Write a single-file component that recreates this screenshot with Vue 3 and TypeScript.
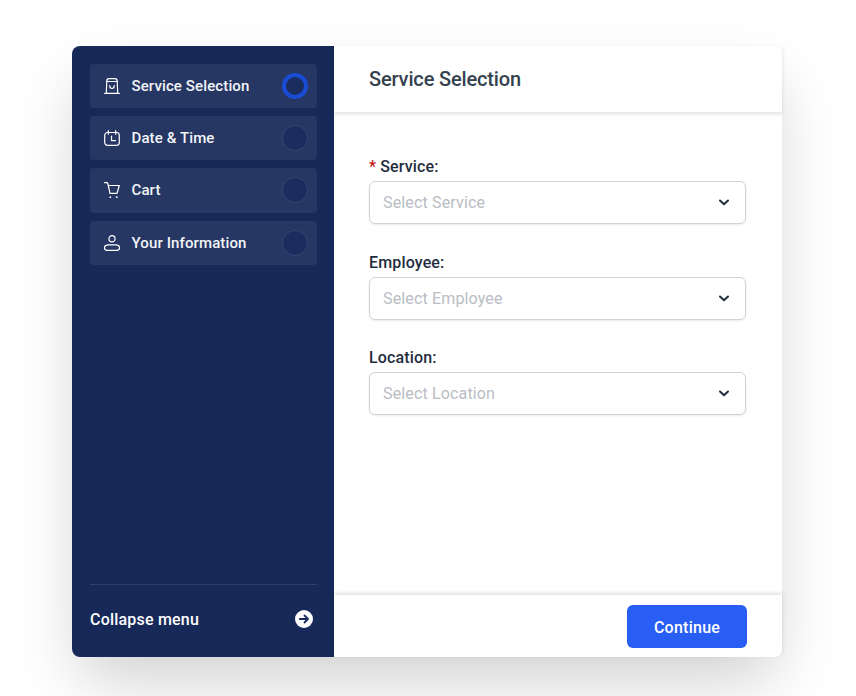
<script setup lang="ts">
const steps = [
  { label: 'Service Selection', icon: 'bag', active: true },
  { label: 'Date & Time', icon: 'cal', active: false },
  { label: 'Cart', icon: 'cart', active: false },
  { label: 'Your Information', icon: 'user', active: false },
]
const fields = [
  { label: 'Service:', placeholder: 'Select Service', required: true },
  { label: 'Employee:', placeholder: 'Select Employee', required: false },
  { label: 'Location:', placeholder: 'Select Location', required: false },
]
</script>

<template>
  <div class="page">
    <div class="card">
      <aside class="side">
        <ul class="steps">
          <li v-for="s in steps" :key="s.label" class="step">
            <svg class="ico" viewBox="0 0 16 16" fill="none" stroke="currentColor" stroke-width="1.2" stroke-linecap="round" stroke-linejoin="round">
              <template v-if="s.icon === 'bag'">
                <path d="M2.300 15.400 2.800 3Q2.900 0.700 5 0.700H11Q13.100 0.700 13.200 3L13.700 15.400" />
                <path d="M0.700 15.400H15.300M2.800 3.500H13.200" />
                <path d="M5.700 7.500Q5.700 10.500 8 10.500T10.300 7.500" />
              </template>
              <template v-else-if="s.icon === 'cal'">
                <rect x="0.700" y="2.500" width="14.600" height="12.800" rx="2.800" />
                <path d="M4.300 0.700v3.500M11.700 0.700v3.500M7.500 6v4.600H11.500" />
              </template>
              <template v-else-if="s.icon === 'cart'">
                <path d="M0.600 0.700H2.800Q3.600 0.700 3.800 1.500L6 11.300H13L15.300 3.500H4.400" />
                <path d="M6.300 15.200h.1M12.700 15.200h.1" stroke-width="1.700" />
              </template>
              <template v-else>
                <circle cx="8" cy="3.800" r="3.100" />
                <path d="M3.700 9.800H12.300C17 10.300 16 15.300 13 15.300H3C0 15.300 -1 10.300 3.700 9.800Z" />
              </template>
            </svg>
            <span class="step-label">{{ s.label }}</span>
            <span class="dot" :class="{ on: s.active }"></span>
          </li>
        </ul>
        <div class="collapse">
          <span>Collapse menu</span>
          <svg class="arrow" viewBox="0 0 18 18">
            <circle cx="9" cy="9" r="9" fill="#fff" />
            <path d="M4.800 9H13M9.500 5.500 13 9 9.500 12.500" fill="none" stroke="#182a5b" stroke-width="1.800" stroke-linecap="round" stroke-linejoin="round" />
          </svg>
        </div>
      </aside>
      <main class="main">
        <header class="head"><h1>Service Selection</h1></header>
        <section class="body">
          <div v-for="f in fields" :key="f.label" class="field">
            <label><span v-if="f.required" class="req">*</span>{{ f.label }}</label>
            <div class="select">
              <span>{{ f.placeholder }}</span>
              <svg class="chev" viewBox="0 0 10 7" fill="none" stroke="#1f2d3d" stroke-width="2" stroke-linecap="round" stroke-linejoin="round">
                <path d="M1 1.500 5 5.300 9 1.500" />
              </svg>
            </div>
          </div>
        </section>
        <footer class="foot"><button type="button">Continue</button></footer>
      </main>
    </div>
  </div>
</template>

<style>
html, body { margin: 0; background: #fff; }
</style>

<style scoped>
* { box-sizing: border-box; }
.page {
  width: 856px;
  height: 696px;
  padding: 46px 74px 39px 72px;
  overflow: hidden;
  font-family: Roboto, "Liberation Sans", sans-serif;
}
.card {
  display: flex;
  height: 611px;
  border-radius: 8px;
  background: #fff;
  box-shadow: 0 30px 60px -8px rgba(0, 0, 0, 0.19);
}
.side {
  width: 262px;
  flex: none;
  display: flex;
  flex-direction: column;
  justify-content: space-between;
  background: #172959;
  border-radius: 8px 0 0 8px;
  padding: 18px 17px 0 18px;
}
.steps {
  list-style: none;
  margin: 0;
  padding: 0;
  display: flex;
  flex-direction: column;
  gap: 8px;
}
.step {
  height: 44.2px;
  display: flex;
  align-items: center;
  padding: 0 9px 0 14px;
  border-radius: 4px;
  background: #263763;
  color: #fff;
}
.ico { width: 16px; height: 16px; flex: none; color: #fff; overflow: visible; }
.step-label {
  flex: 1;
  margin-left: 11.5px;
  font-size: 15px;
  font-weight: 500;
  letter-spacing: 0.12px;
  color: #f2f4f8;
}
.dot {
  width: 26px;
  height: 26px;
  border-radius: 50%;
  background: #1b2c5e;
  border: 1px solid #34456f;
}
.dot.on { border: 4px solid #1a4bd4; }
.collapse {
  height: 73px;
  display: flex;
  align-items: center;
  justify-content: space-between;
  padding: 0 4px 4px 0;
  border-top: 1px solid #2e3f6c;
  color: #fff;
  font-size: 16px;
  font-weight: 500;
  letter-spacing: 0.2px;
}
.arrow { width: 18px; height: 18px; }
.main { flex: 1; display: flex; flex-direction: column; min-width: 0; }
.head {
  height: 66px;
  display: flex;
  align-items: center;
  padding-left: 35px;
  box-shadow: 0 2px 4px rgba(0, 0, 0, 0.12);
}
.head h1 {
  margin: 0;
  color: #34424f;
  font-size: 20px;
  font-weight: 500;
  letter-spacing: -0.15px;
}
.body {
  flex: 1;
  padding: 45px 36px 0 35px;
  display: flex;
  flex-direction: column;
  gap: 28.500px;
}
.field label {
  display: block;
  height: 24px;
  line-height: 19px;
  color: #1f2d3d;
  font-size: 16px;
  font-weight: 500;
  letter-spacing: 0.15px;
}
.req { color: #c40f0f; margin-right: 4px; }
.select {
  height: 43px;
  display: flex;
  align-items: center;
  justify-content: space-between;
  padding: 0 16px 0 13px;
  border: 1px solid #d0d2d6;
  border-radius: 6px;
  box-shadow: 0 1px 2px rgba(60, 80, 110, 0.12);
  color: #b9bdc3;
  font-size: 16px;
  letter-spacing: 0.15px;
}
.chev { width: 10px; height: 7px; }
.foot {
  height: 62px;
  display: flex;
  align-items: center;
  justify-content: flex-end;
  padding: 0 35px 0 0;
  box-shadow: 0 -2px 4px rgba(0, 0, 0, 0.12);
}
.foot button {
  width: 120px;
  height: 43px;
  padding: 2px 0 0;
  border: 0;
  border-radius: 6px;
  background: #295ef5;
  color: #fff;
  font: 500 16px Roboto, sans-serif;
  letter-spacing: 0.25px;
}
</style>
